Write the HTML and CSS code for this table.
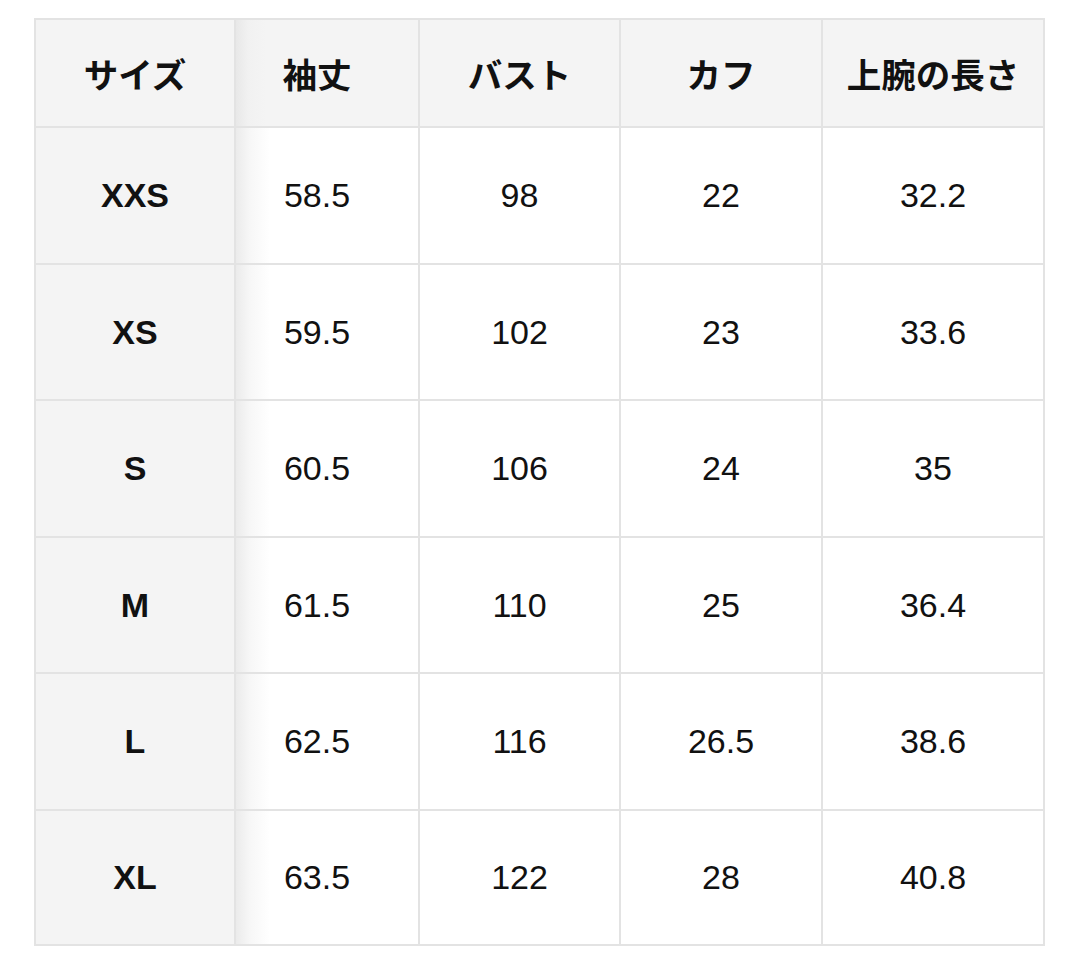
FILE: index.html
```html
<!DOCTYPE html>
<html lang="ja">
<head>
<meta charset="utf-8">
<link rel="stylesheet" href="styles.css">
</head>
<body>
<table class="size-table">
  <colgroup>
    <col class="c1"><col class="c2"><col class="c3"><col class="c4"><col class="c5">
  </colgroup>
  <thead>
    <tr class="head">
      <th>サイズ</th><th>袖丈</th><th>バスト</th><th>カフ</th><th>上腕の長さ</th>
    </tr>
  </thead>
  <tbody>
    <tr class="r1"><th>XXS</th><td>58.5</td><td>98</td><td>22</td><td>32.2</td></tr>
    <tr class="r2"><th>XS</th><td>59.5</td><td>102</td><td>23</td><td>33.6</td></tr>
    <tr class="r1"><th>S</th><td>60.5</td><td>106</td><td>24</td><td>35</td></tr>
    <tr class="r2"><th>M</th><td>61.5</td><td>110</td><td>25</td><td>36.4</td></tr>
    <tr class="r1"><th>L</th><td>62.5</td><td>116</td><td>26.5</td><td>38.6</td></tr>
    <tr class="r3"><th>XL</th><td>63.5</td><td>122</td><td>28</td><td>40.8</td></tr>
  </tbody>
</table>
</body>
</html>
```
FILE: styles.css
```css
html, body {
  margin: 0;
  background: #ffffff;
}
body {
  padding: 18px 0 0 34px;
  font-family: "Liberation Sans", Arial, sans-serif;
  color: #111111;
}
.size-table {
  border-collapse: collapse;
  table-layout: fixed;
  width: 1009px;
}
.c1 { width: 200px; }
.c2 { width: 184px; }
.c3 { width: 201px; }
.c4 { width: 202px; }
.c5 { width: 222px; }
.size-table th,
.size-table td {
  border: 2px solid #e3e3e3;
  text-align: center;
  vertical-align: middle;
  padding: 0;
  font-size: 34px;
}
.size-table td {
  font-weight: normal;
  background: #ffffff;
}
.size-table th {
  font-weight: bold;
  background: #f4f4f4;
}
.head th {
  font-family: "Noto Sans CJK JP", "Liberation Sans", sans-serif;
  font-size: 34.5px;
  height: 106px;
}
.r1 th, .r1 td { height: 135px; }
.r2 th, .r2 td { height: 134px; }
.r3 th, .r3 td { height: 133px; }
.size-table td:nth-child(2),
.head th:nth-child(2) {
  padding-right: 20px;
}
.size-table td:nth-child(2) {
  background: linear-gradient(to right, #ebebeb 0px, #f7f7f7 14px, #ffffff 34px);
}
.head th:nth-child(2) {
  background: linear-gradient(to right, #e8e8e8 0px, #f1f1f1 12px, #f4f4f4 30px);
}
```
